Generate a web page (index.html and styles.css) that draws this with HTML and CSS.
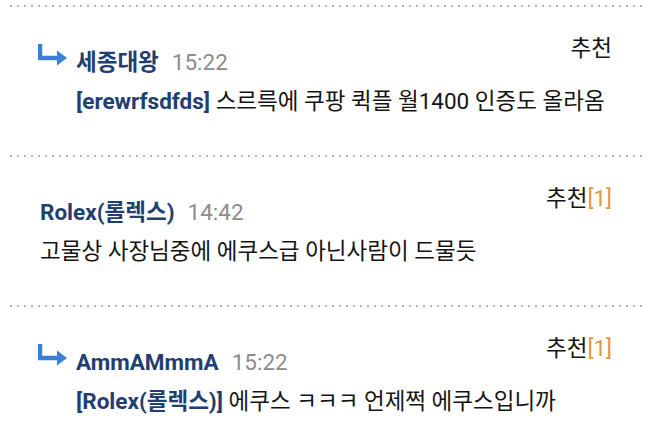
FILE: index.html
```
<html>
<head>
<meta name="viewport" content="width=device-width, initial-scale=1">
<title>댓글</title>
<link rel="stylesheet" href="styles.css">
</head>
<body>
<div class="comments">
    <div class="item reply">
        <div class="arrow">
            <svg width="30" height="22" viewBox="0 0 30 22"><path d="M2 0 V14 H21" fill="none" stroke="#3b7fd6" stroke-width="4.5"/><path d="M19 6.5 L29 14 L19 21.5 Z" fill="#3b7fd6"/></svg>
        </div>
        <div class="body">
            <div class="head"><span class="name">세종대왕</span><span class="time">15:22</span></div>
            <div class="text"><span class="to">[erewrfsdfds]</span> 스르륵에 쿠팡 퀵플 월1400 인증도 올라옴</div>
        </div>
        <div class="rec">추천</div>
    </div>
    <div class="item">
        <div class="body">
            <div class="head"><span class="name">Rolex(롤렉스)</span><span class="time">14:42</span></div>
            <div class="text">고물상 사장님중에 에쿠스급 아닌사람이 드물듯</div>
        </div>
        <div class="rec">추천<span class="count">[1]</span></div>
    </div>
    <div class="item reply">
        <div class="arrow">
            <svg width="30" height="22" viewBox="0 0 30 22"><path d="M2 0 V14 H21" fill="none" stroke="#3b7fd6" stroke-width="4.5"/><path d="M19 6.5 L29 14 L19 21.5 Z" fill="#3b7fd6"/></svg>
        </div>
        <div class="body">
            <div class="head"><span class="name">AmmAMmmA</span><span class="time">15:22</span></div>
            <div class="text"><span class="to">[Rolex(롤렉스)]</span> 에쿠스 ㅋㅋㅋ 언제쩍 에쿠스입니까</div>
        </div>
        <div class="rec">추천<span class="count">[1]</span></div>
    </div>
</div>
</body>
</html>
```

FILE: styles.css
```
body {
    margin: 0;
    padding: 0;
    background: #fff;
    color: #141414;
    font-family: Roboto, "Noto Sans CJK KR", sans-serif;
}
.comments {
    padding: 5px 10px 0 10px;
}
.item {
    display: flex;
    height: 150px;
    padding: 0 31px 0 30px;
    background-image: linear-gradient(to right, #b4b4b4 2px, transparent 2px);
    background-size: 7px 2px;
    background-repeat: repeat-x;
    background-position: 0 0;
    box-sizing: border-box;
}
.arrow {
    width: 36px;
    padding-top: 39px;
    flex: none;
}
.arrow svg {
    display: block;
    margin-left: -2px;
}
.body {
    flex: 1;
    min-width: 0;
    padding-top: 42px;
}
.head, .text {
    font-size: 22.5px;
    line-height: 30px;
    white-space: nowrap;
}
.text {
    margin-top: 9px;
}
.name, .to {
    color: #223d70;
    font-weight: bold;
}
.time {
    color: #8c8c8c;
    margin-left: 13px;
}
.rec {
    flex: none;
    white-space: nowrap;
    padding-top: 28px;
    font-size: 22.5px;
    line-height: 30px;
}
.count {
    color: #e3953f;
}
```
